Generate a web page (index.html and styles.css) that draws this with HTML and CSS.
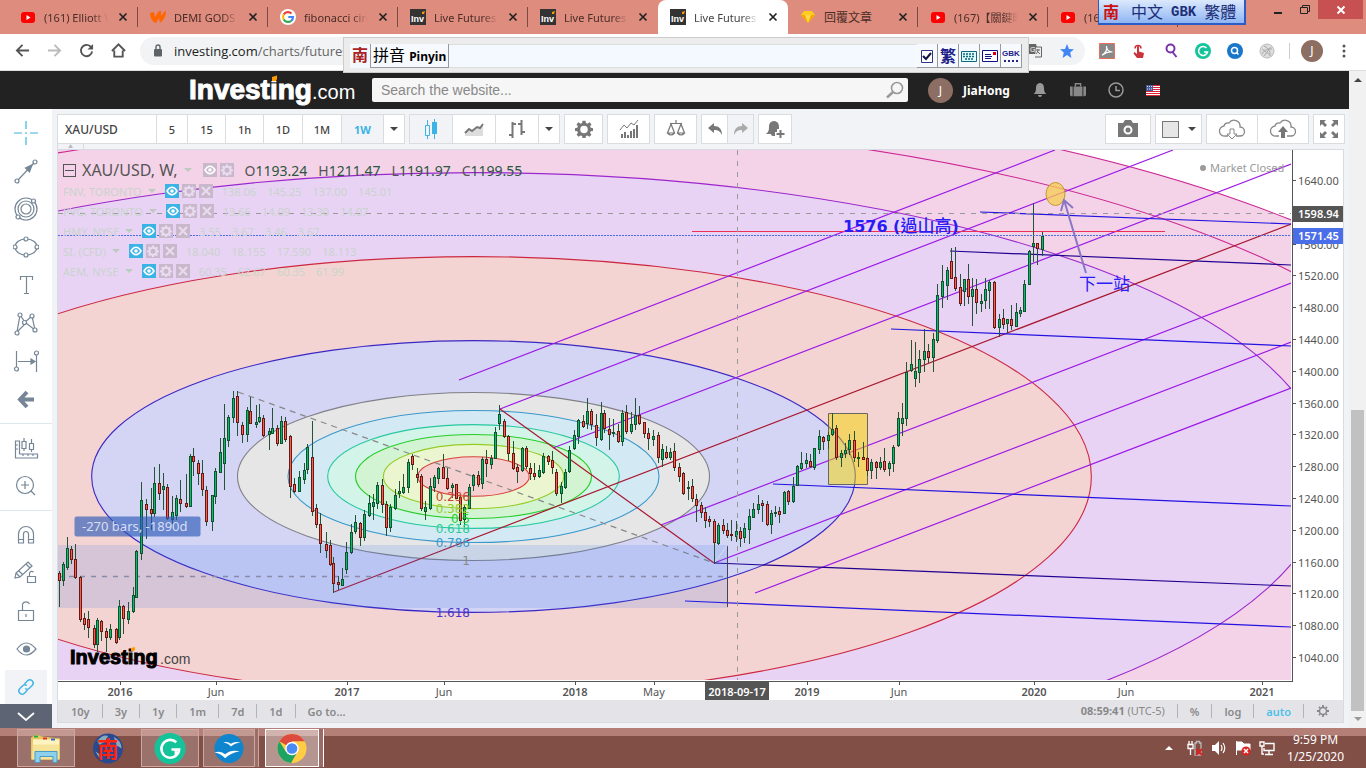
FILE: index.html
```html
<!DOCTYPE html>
<html lang="en">
<head>
<meta charset="utf-8">
<title>Live Futures Charts</title>
<link rel="stylesheet" href="styles.css">
</head>
<body>
<svg class="defs" aria-hidden="true">
  <symbol id="i-x" viewBox="0 0 10 10"><path d="M1.5 1.5l7 7M8.500 1.500l-7 7" stroke="currentColor" stroke-width="1.700" fill="none"/></symbol>
  <symbol id="i-yt" viewBox="0 0 16 16"><rect x="1" y="3" width="14" height="11" rx="3" fill="#f00"/><path d="M6.500 6v5l4-2.500z" fill="#fff"/></symbol>
  <symbol id="i-inv" viewBox="0 0 16 16"><rect width="16" height="16" fill="#333"/><text x="1" y="12.500" font-family="Liberation Sans" font-weight="700" font-size="9" fill="#fff">Inv</text><path d="M12 3l3-1-1 3h-2z" fill="#f90"/></symbol>
  <symbol id="i-eye" viewBox="0 0 14 14"><path d="M2 7c3-5 7-5 10 0-3 5-7 5-10 0z" fill="none" stroke="#fff" stroke-width="1.500"/><circle cx="7" cy="7" r="1.800" fill="#fff"/></symbol>
  <symbol id="i-gear" viewBox="0 0 24 24"><path fill-rule="evenodd" fill="currentColor" d="M10 1h4l.6 3 2 .9L19.300 3 22 5.800l-1.800 2.600.8 2 3 .6v3.500l-3 .6-.9 2 1.800 2.500-2.700 2.700-2.600-1.800-2 .8-.6 3h-4l-.6-3-2-.8-2.600 1.800-2.700-2.700 1.800-2.500-.9-2-3-.6V11l3-.6.8-2L2 5.800 4.700 3l2.700 1.900 2-.9zM12 7.500a5 5 0 1 0 0 10 5 5 0 0 0 0-10z"/></symbol>
  <symbol id="i-del" viewBox="0 0 14 14"><path d="M3 3l8 8M11 3l-8 8" stroke="currentColor" stroke-width="2"/></symbol>
  <symbol id="i-down" viewBox="0 0 8 4"><path d="M0 0h8L4 4z" fill="currentColor"/></symbol>
  <symbol id="i-cloud" viewBox="0 0 28 20"><path d="M10 17H7a5 5 0 0 1-1-10 4 4 0 0 1 5-3 6 6 0 0 1 11 4 4.500 4.500 0 0 1 0 9h-4" fill="none" stroke="#888" stroke-width="1.300"/></symbol>
</svg>

<header class="tabs">
  <div class="tab"><svg class="fav"><use href="#i-yt"/></svg><span class="tab-title">(161) Elliott Wave</span><button class="tab-x" aria-label="Close tab"><svg><use href="#i-x"/></svg></button></div>
  <div class="tab"><svg class="fav" viewBox="0 0 16 16"><path d="M0 4l4-1 1 5 4-6 2 0 0 5 3-4 2-1c0 5-2 9-6 12l-1-5-3 5C2 13 0 8 0 4z" fill="#f60"/></svg><span class="tab-title">DEMI GODS</span><button class="tab-x" aria-label="Close tab"><svg><use href="#i-x"/></svg></button></div>
  <div class="tab"><svg class="fav" viewBox="0 0 16 16"><circle cx="8" cy="8" r="8" fill="#fff"/><g fill="none" stroke-width="2.200"><path d="M11.500 4.500A5 5 0 0 0 3.700 5.500" stroke="#ea4335"/><path d="M3.700 5.500a5 5 0 0 0 0 5" stroke="#fbbc05"/><path d="M3.700 10.500a5 5 0 0 0 7.500 1.300" stroke="#34a853"/><path d="M11.200 11.800A5 5 0 0 0 13 8H8.300" stroke="#4285f4"/></g></svg><span class="tab-title">fibonacci circle</span><button class="tab-x" aria-label="Close tab"><svg><use href="#i-x"/></svg></button></div>
  <div class="tab"><svg class="fav"><use href="#i-inv"/></svg><span class="tab-title">Live Futures</span><button class="tab-x" aria-label="Close tab"><svg><use href="#i-x"/></svg></button></div>
  <div class="tab before"><svg class="fav"><use href="#i-inv"/></svg><span class="tab-title">Live Futures</span><button class="tab-x" aria-label="Close tab"><svg><use href="#i-x"/></svg></button></div>
  <div class="tab active"><svg class="fav"><use href="#i-inv"/></svg><span class="tab-title">Live Futures</span><button class="tab-x" aria-label="Close tab"><svg><use href="#i-x"/></svg></button></div>
  <div class="tab"><svg class="fav" viewBox="0 0 16 16"><path d="M4 2h8l3 4-7 8-7-8z" fill="#fc2"/><path d="M1 6h14l-7 8z" fill="#f5a800"/><path d="M5 6h6l-3 8z" fill="#ffd94a"/></svg><span class="tab-title cjk">回覆文章</span><button class="tab-x" aria-label="Close tab"><svg><use href="#i-x"/></svg></button></div>
  <div class="tab"><svg class="fav"><use href="#i-yt"/></svg><span class="tab-title">(167)【關鍵時刻</span><button class="tab-x" aria-label="Close tab"><svg><use href="#i-x"/></svg></button></div>
  <div class="tab"><svg class="fav"><use href="#i-yt"/></svg><span class="tab-title">(167)</span></div>
  <div class="win">
    <button class="win-b" aria-label="Minimize"><svg viewBox="0 0 12 12"><path d="M2 9h8" stroke="#222" stroke-width="2"/></svg></button>
    <button class="win-b" aria-label="Restore"><svg viewBox="0 0 12 12"><path d="M3.500 3V1.500h7v6H9M1.500 3.500h7v6h-7z" fill="none" stroke="#222"/></svg></button>
    <button class="win-b close" aria-label="Close"><svg viewBox="0 0 12 12"><path d="M2.500 2.500l7 7M9.500 2.500l-7 7" stroke="#fff" stroke-width="2"/></svg></button>
  </div>
  <div class="ime-mini"><b class="nan">南</b><span>中文</span><span>GBK</span><span>繁體</span></div>
</header>

<nav class="addr">
  <button class="nav-b" aria-label="Back"><svg viewBox="0 0 16 16"><path d="M15 8H2M8 2L2 8l6 6" fill="none" stroke="#555" stroke-width="2"/></svg></button>
  <button class="nav-b" aria-label="Forward"><svg viewBox="0 0 16 16"><path d="M1 8h13M8 2l6 6-6 6" fill="none" stroke="#bbb" stroke-width="2"/></svg></button>
  <button class="nav-b" aria-label="Reload"><svg viewBox="0 0 16 16"><path d="M14 9a6 6 0 1 1-2-5.500L14 5" fill="none" stroke="#555" stroke-width="2"/><path d="M15 1v6H9z" fill="#555"/></svg></button>
  <button class="nav-b" aria-label="Home"><svg viewBox="0 0 16 16"><path d="M1 8.500L8 1.500l7 7M3.500 8v6.500h9V8" fill="none" stroke="#555" stroke-width="2"/></svg></button>
  <div class="omni">
    <svg class="lock" viewBox="0 0 10 13"><rect x="1" y="5" width="8" height="7.500" rx="1" fill="#5f6368"/><path d="M3 5V3a2 2 0 0 1 4 0v2" fill="none" stroke="#5f6368" stroke-width="1.400"/></svg>
    <span class="url">investing.com<i>/charts/futures-charts</i></span>
    <svg class="s14 tr" viewBox="0 0 14 14"><path d="M0 0h8l3 10H1z" fill="#666"/><path d="M8 3h5.500v10H7" fill="#eee" stroke="#666"/><text x="2" y="8" font-size="7" fill="#fff" font-family="Liberation Sans">G</text><path d="M8 6h4M10 5c0 3-1 4-2 5M9 7l3 3" stroke="#666" fill="none"/></svg>
    <svg class="s14 star" viewBox="0 0 14 14"><path d="M7 0l2 4.900 5 .4-3.800 3.300L11.400 14 7 11l-4.400 3 1.200-5.400L0 5.300l5-.4z" fill="#4285f4"/></svg>
  </div>
  <svg class="ext" viewBox="0 0 16 16"><path d="M.5.5h15v15H.5z" fill="#888" stroke="#e76f5a"/><path d="M3 12c4-2 5-6 4.500-9 0 4 3 6 6 6-4-.5-7 .5-10 3z" fill="none" stroke="#fff" stroke-width="1.200"/></svg>
  <svg class="ext" viewBox="0 0 16 16"><path d="M6 4v7L3.500 9 2.500 10.500 6 15h6l1-5-5-1.500V4a1 1 0 0 0-2 0z" fill="#c9343c"/><path d="M4 5.500a3 3 0 1 1 6 0" fill="none" stroke="#c9343c" stroke-width="1.500"/></svg>
  <svg class="ext" viewBox="0 0 16 16"><circle cx="7.500" cy="5.500" r="4" fill="none" stroke="#73a" stroke-width="2"/><path d="M9.500 9l4 5" stroke="#73a" stroke-width="2"/></svg>
  <svg class="ext" viewBox="0 0 16 16"><circle cx="8" cy="8" r="8" fill="#15c39a"/><path d="M11.500 5a4.500 4.500 0 1 0 1 4H9" fill="none" stroke="#fff" stroke-width="1.500"/></svg>
  <svg class="ext" viewBox="0 0 16 16"><circle cx="8" cy="8" r="8" fill="#1a76c8"/><circle cx="7.500" cy="7.500" r="3" fill="none" stroke="#fff" stroke-width="1.500"/><path d="M9.500 9.500l2 2" stroke="#fff" stroke-width="1.500"/></svg>
  <svg class="ext" viewBox="0 0 16 16"><circle cx="8" cy="8" r="7" fill="#ddd" stroke="#bbb"/><path d="M5 3a9 9 0 0 1 6 10M3 11a9 9 0 0 1 10-5M5 13l7-9M3 6l8 6" fill="none" stroke="#aaa"/></svg>
  <i class="vsep"></i>
  <button class="avatar">J</button>
  <button class="dots" aria-label="Menu"><svg viewBox="0 0 4 16"><circle cx="2" cy="3" r="1.500"/><circle cx="2" cy="8" r="1.500"/><circle cx="2" cy="13" r="1.500"/></svg></button>
  <div class="ime">
    <b class="nan2">南</b><label class="pin" for="pinyin">拼音 <b>Pinyin</b></label><input id="pinyin" class="ime-in">
    <button class="ib" aria-label="Confirm"><svg viewBox="0 0 18 18"><path d="M3.500 3.500h11v12h-11z" fill="#fff" stroke="#338"/><path d="M5 9l3 3 5-6" fill="none" stroke="#114" stroke-width="2"/></svg></button>
    <button class="ib zh">繁</button>
    <button class="ib" aria-label="Keyboard"><svg viewBox="0 0 18 18"><path d="M1.500 4.500h15v10h-15z" fill="#dff" stroke="#167"/><path d="M3 7h12M3 9.500h12M5 12h8" stroke="#167" stroke-width="1.500" stroke-dasharray="2 1"/></svg></button>
    <button class="ib" aria-label="Mail"><svg viewBox="0 0 18 18"><path d="M1.500 3.500h15v11h-15z" fill="#fff" stroke="#118"/><path d="M4 7.500h6M4 9.500h7M4 11.500h6" stroke="#118"/><path d="M12 5h3v3h-3z" fill="#d00"/></svg></button>
    <button class="ib gbk">GBK<span></span></button>
  </div>
</nav>

<div class="view">
<div class="page">
  <header class="site">
    <svg class="logo" viewBox="0 0 170 38" role="img" aria-label="Investing.com"><text x="0" y="28" class="lg-b">Investing</text><text x="123" y="28" class="lg-c">.com</text><path d="M82 4h7l-1 6h-6z" fill="#222"/><path d="M83 6l5-1.500V8l-1 2h-4z" fill="#f90"/></svg>
    <form class="search"><input type="text" placeholder="Search the website..." aria-label="Search the website"><button type="button" aria-label="Search"><svg viewBox="0 0 18 18"><circle cx="11" cy="7" r="5.500" fill="none" stroke="#999" stroke-width="1.600"/><path d="M7 11l-6 5.500" stroke="#999" stroke-width="2.500"/></svg></button></form>
    <span class="avatar big">J</span>
    <a href="#" class="user">JiaHong</a>
    <svg class="hi" viewBox="0 0 16 16"><path d="M8 1c3.500.5 4 3 4 5.500 0 3 1 4.500 2.500 5.500h-13C3 11 4 9.500 4 6.500 4 4 4.500 1.500 8 1zM6 13h4a2 2 0 0 1-4 0z" fill="#999"/></svg>
    <svg class="hi" viewBox="0 0 18 16"><path d="M0 4h3v11H1.500Q0 15 0 13zM4 4h10v11H4zM15 4h3v9q0 2-1.500 2H15z" fill="#888"/><path d="M6 4V1h6v3" fill="none" stroke="#888" stroke-width="1.500"/></svg>
    <svg class="hi" viewBox="0 0 16 16"><circle cx="8" cy="8" r="7" fill="none" stroke="#999" stroke-width="1.500"/><path d="M8 4v4.500h4" fill="none" stroke="#999" stroke-width="1.500"/></svg>
    <svg class="flag" viewBox="0 0 14 11"><path fill="#fff" d="M0 0h14v11H0z"/><path d="M0 .5h14M0 2.500h14M0 4.500h14M0 6.500h14M0 8.500h14M0 10.500h14" stroke="#d23"/><path fill="#44589c" d="M0 0h7v6H0z"/><path d="M1 1.500h5M1 4h5" stroke="#dde" stroke-dasharray="1 1"/></svg>
  </header>
  <div class="work">
    <aside class="side">
      <button class="tool" aria-label="Cross"><svg viewBox="0 0 26 26"><path d="M1 13h8M17 13h8M13 1v8M13 17v8M12 13h2" stroke="#3bb3e4" fill="none"/></svg></button>
      <button class="tool" aria-label="Trend line"><svg viewBox="0 0 26 26"><path d="M5 22L21 5" /><circle cx="4" cy="23" r="2"/><circle cx="22" cy="4" r="2"/><path d="M19 7l-2.500 7-4-4z" fill="#758696"/></svg></button>
      <button class="tool" aria-label="Fibonacci circles"><svg viewBox="0 0 26 26"><circle cx="13" cy="13" r="11"/><circle cx="13" cy="13" r="8"/><circle cx="13" cy="13" r="5"/><circle cx="20.500" cy="5" r="2" fill="#fff"/><circle cx="5" cy="21" r="2" fill="#fff"/></svg></button>
      <button class="tool" aria-label="Ellipse"><svg viewBox="0 0 26 26"><ellipse cx="13" cy="13" rx="11" ry="8"/><g fill="#fff"><circle cx="13" cy="5" r="2"/><circle cx="13" cy="21" r="2"/><circle cx="2" cy="13" r="2"/><circle cx="24" cy="13" r="2"/></g></svg></button>
      <button class="tool" aria-label="Text"><svg viewBox="0 0 26 26"><path d="M7.500 8V4.500h12V8M13.500 4.500v17M11 21.500h5"/></svg></button>
      <button class="tool" aria-label="Pattern"><svg viewBox="0 0 26 26"><path d="M4 22L7 5l5 7 7-6 3 14-9-7z"/><g fill="#fff"><circle cx="4" cy="23" r="2"/><circle cx="7" cy="5" r="2"/><circle cx="11.500" cy="12.500" r="2"/><circle cx="19" cy="6" r="2"/><circle cx="22" cy="20" r="2"/></g></svg></button>
      <button class="tool" aria-label="Range"><svg viewBox="0 0 26 26"><path d="M3.500 3v16M23.500 7v17M5 13.500h15"/><circle cx="3.500" cy="21" r="2"/><circle cx="23.500" cy="5" r="2"/><path d="M18 11l4 2.500-4 2.500z" fill="#758696"/></svg></button>
      <button class="tool" aria-label="Arrow"><svg viewBox="0 0 26 26"><path d="M14 6l-7 7.500 7 7.500M7 13.500h14" stroke-width="4"/></svg></button>
      <hr>
      <button class="tool" aria-label="Measure"><svg viewBox="0 0 26 26"><path d="M2.500 6v17h22v-4h-18V6zM11 3v3M11 14v2M9 6.500h4v7H9zM18.500 4v4M18.500 15v2M16.500 8.500h4v6h-4zM3 10h2M3 14h2M10 19v2M15 19v2M20 19v2"/></svg></button>
      <button class="tool" aria-label="Zoom"><svg viewBox="0 0 26 26"><circle cx="12" cy="12" r="8.500"/><path d="M8 12h8M12 8v8M18 18l4 4"/></svg></button>
      <hr>
      <button class="tool" aria-label="Magnet"><svg viewBox="0 0 26 26"><path d="M5.500 21v-9a7.500 7.500 0 0 1 15 0v9h-5v-9a2.500 2.500 0 0 0-5 0v9zM5.500 17.500h5M15.500 17.500h5"/></svg></button>
      <button class="tool" aria-label="Lock drawing"><svg viewBox="0 0 26 26"><path d="M2 18l1-5L15 2l4 4L7 17zM3 13l4 4M6 11l4 4M13 4l4 4M14.500 16.500h8v6h-8zM16.500 16v-3a2.500 2.500 0 0 1 4-1"/></svg></button>
      <button class="tool" aria-label="Lock"><svg viewBox="0 0 26 26"><path d="M5.500 12.500h15v10h-15zM9.500 12V6a4 4 0 0 1 7 0M13 16v3"/></svg></button>
      <button class="tool" aria-label="Hide"><svg viewBox="0 0 26 26"><path d="M4 13q9-12 19 0-10 12-19 0z"/><circle cx="13.500" cy="13" r="3" fill="#758696"/></svg></button>
      <button class="tool on" aria-label="Link"><svg class="link" viewBox="0 0 26 26"><path d="M11 9l4-4a4 4 0 0 1 6 6l-4 4a4 4 0 0 1-5 0M15 17l-4 4a4 4 0 0 1-6-6l4-4a4 4 0 0 1 5 0"/></svg></button>
      <button class="more" aria-label="More"><svg viewBox="0 0 18 9"><path d="M1 1l8 7 8-7" fill="none" stroke="#fff" stroke-width="1.800"/></svg></button>
    </aside>
    <main class="main">
      <div class="bar">
        <div class="grp"><button class="sym">XAU/USD</button><button class="w30">5</button><button class="w37">15</button><button class="w37">1h</button><button class="w38">1D</button><button class="w38">1M</button><button class="w41 sel">1W</button><button class="w20" aria-label="Intervals"><svg class="dd"><use href="#i-down"/></svg></button></div>
        <div class="grp"><button class="w42 sel" aria-label="Candles"><svg class="ic" viewBox="0 0 20 20"><path d="M6.500 1v5M6.500 17v3M4.500 6.500h4v10h-4zM13.500 0v20" fill="none" stroke="#3bb3e4"/><path d="M11 3h5v12h-5z" fill="#3bb3e4"/></svg></button><button class="w42" aria-label="Area"><svg class="ic" viewBox="0 0 20 20"><path d="M1 14l4-4 3 2 5-4 3 1 3-4v12H1z" fill="#ddd"/><path d="M1 14l4-4 3 2 5-4 3 1 3-4" fill="none" stroke="#777" stroke-width="2"/></svg></button><button class="w42" aria-label="Bars"><svg class="ic" viewBox="0 0 20 20"><path d="M5.500 3v16M2 16h3M5 5h4M14.500 1v15M11 5h3M14 13h4" fill="none" stroke="#777" stroke-width="2"/></svg></button><button class="w20" aria-label="Styles"><svg class="dd"><use href="#i-down"/></svg></button></div>
        <div class="grp"><button class="w37" aria-label="Settings"><svg class="ic g"><use href="#i-gear"/></svg></button></div>
        <div class="grp"><button class="w41" aria-label="Indicators"><svg class="ic" viewBox="0 0 20 20"><path d="M3 19v-4M6 19v-6M9 19v-3M12 19v-7M15 19V10M18 19V6" stroke="#777" stroke-width="2"/><path d="M1 11l4-5 3 3 4-5 3 2 4-5" fill="none" stroke="#777"/></svg></button></div>
        <div class="grp"><button class="w41" aria-label="Compare"><svg class="ic" viewBox="0 0 20 20"><path d="M10 1v3M4 4.500h12M5 5L1.500 14h7zM15 5l-3.500 9h7zM1.500 14q3.500 4 7 0M11.500 14q3.500 4 7 0" fill="none" stroke="#777" stroke-width="1.200"/></svg></button></div>
        <div class="grp"><button class="w25" aria-label="Undo"><svg class="ic s" viewBox="0 0 16 16"><path d="M1 7l6-5v3c5 0 8 3 8 9-2-4-4-5-8-5v3z" fill="#777"/></svg></button><button class="w25 sel" aria-label="Redo"><svg class="ic s" viewBox="0 0 16 16"><path d="M15 7L9 2v3c-5 0-8 3-8 9 2-4 4-5 8-5v3z" fill="#aaa"/></svg></button></div>
        <div class="grp"><button class="w32" aria-label="Alert"><svg class="ic" viewBox="0 0 20 20"><path d="M9 2c4 .5 5 3 5 6v2h-2v3h-2v4H8q-2 0-2-2H1c2-2 3-3 3-7 0-3 1-5.500 5-6z" fill="#777"/><path d="M15.500 11v8M11.500 15h8" stroke="#777" stroke-width="2"/></svg></button></div>
        <span class="grow"></span>
        <div class="grp"><button class="w44" aria-label="Snapshot"><svg class="ic" viewBox="0 0 20 20"><path fill-rule="evenodd" d="M0 4h5l2-3h6l2 3h5v14H0zM10 6.500a4.500 4.500 0 1 0 0 9 4.500 4.500 0 0 0 0-9z" fill="#777"/><circle cx="10" cy="11" r="2.500" fill="#777"/></svg></button></div>
        <div class="grp"><button class="w45" aria-label="Background"><span class="sq"></span><svg class="dd"><use href="#i-down"/></svg></button></div>
        <div class="grp"><button class="w50" aria-label="Load"><svg class="cl" viewBox="0 0 28 20"><use href="#i-cloud"/><path d="M12 10h4v5h3l-5 5-5-5h3z" fill="#fff" stroke="#888"/></svg></button><button class="w50" aria-label="Save"><svg class="cl" viewBox="0 0 28 20"><use href="#i-cloud"/><path d="M12 19v-6H9l5-6 5 6h-3v6z" fill="#777"/></svg></button></div>
        <div class="grp"><button class="w30" aria-label="Full screen"><svg class="ic" viewBox="0 0 20 20"><path d="M1 1h6L5 3l3 3-2 2-3-3-2 2zM19 1v6l-2-2-3 3-2-2 3-3-2-2zM1 19v-6l2 2 3-3 2 2-3 3 2 2zM19 19h-6l2-2-3-3 2-2 3 3 2-2z" fill="#777"/></svg></button></div>
      </div>
      <div class="fold"><button aria-label="Collapse">▲</button></div>
      <section class="chart">
        <div class="plot">
        <svg class="canvas" viewBox="58 150 1285 550" preserveAspectRatio="xMidYMid slice">
          <defs><clipPath id="pane"><path d="M58 150h1233v530H58z"/></clipPath></defs>
          <path d="M58 150h1285v550H58z" fill="#fff"/>
          <g clip-path="url(#pane)">
            <g id="rings"></g>
            <g fill="none" stroke-width="1.200">
              <path d="M459 380L1055 150M500 409L1173 150M553 448L1291 164M661 525L1291 283M714 563L1291 342M755 593L1291 388" stroke="#9c1ae6"/>
              <path d="M334 592L1291 224M500 409L714 563" stroke="#a81830"/>
              <path d="M714 563L1291 586M950 251L1291 265" stroke="#200090"/>
              <path d="M685 601L1291 627M773 484L1291 506M891 329L1291 346M980 212L1291 224" stroke="#2412e0"/>
              <path d="M238 392L714 563" stroke="#888" stroke-dasharray="6 5"/>
            </g>
            <path d="M692 231.500H1165" stroke="#ee3058" stroke-width="1.200"/>
            <path d="M58 545h670v63H58z" fill="#2d73f0" fill-opacity=".15"/>
            <path d="M58 576.500H727" stroke="#888aa8" stroke-width="1.500" stroke-dasharray="5 6"/>
            <path d="M727.500 546v61" stroke="#445"/>
            <path d="M714 563l13-17" stroke="#dde" />
            <g id="candles" shape-rendering="crispEdges"></g>
            <path d="M828.500 413.500h39v71h-39z" fill="#f4d400" fill-opacity=".5" stroke="#666"/>
            <g id="candles-top" shape-rendering="crispEdges"></g>
            <path d="M58 235.500H1291" stroke="#4a6ee8" stroke-dasharray="2 1"/>
            <path d="M58 213.500H1291M737.500 150V680" stroke="#999" stroke-dasharray="5 6" fill="none"/>
            <ellipse cx="1055.500" cy="194" rx="9.500" ry="11.500" fill="#f7cc50" fill-opacity=".75" stroke="#c09a30"/>
            <path d="M1086 273L1064 200M1061 211l3-11 9 8" fill="none" stroke="#8878c4" stroke-width="2"/>
            <rect x="74.500" y="516.500" width="126" height="20" rx="2" fill="#2c5ab8" fill-opacity=".65"/>
            <text x="82" y="531" class="t-range">-270 bars, -1890d</text>
            <text x="843" y="232" class="t-note b">1576 (<tspan class="han">過山高</tspan>)</text>
            <text x="1079" y="290" class="t-note">下一站</text>
            <g class="t-fib" text-anchor="end">
              <text x="470" y="501" fill="#cc4438">0.236</text><text x="470" y="513" fill="#94cc28">0.382</text><text x="470" y="523" fill="#28cc28">0.5</text><text x="470" y="533" fill="#28cc94">0.618</text><text x="470" y="547" fill="#3a98cc">0.786</text><text x="470" y="565" fill="#888">1</text><text x="470" y="617" fill="#4a34cc">1.618</text>
            </g>
            <g fill="#000"><text x="70" y="664" class="lg-w">Investing</text><text x="160" y="664" class="lg-wc">.com</text><path d="M131 648l4-1v3l-1 1h-3z" fill="#f90"/></g>
            <circle cx="1203" cy="168" r="3" fill="#999"/><text x="1210" y="172" class="t-closed">Market Closed</text>
          </g>
          <path d="M1292.500 150V681.500M58 681.500H1293" stroke="#555" fill="none"/>
          <g id="axes" class="t-axis"></g>
          <path d="M1293 206h50v16h-50z" fill="#555"/><text x="1298" y="218" class="t-tag">1598.94</text>
          <path d="M1293 228h50v16h-50z" fill="#4a6ee8"/><text x="1298" y="240" class="t-tag">1571.45</text>
          <path d="M705 682h64v18h-64z" fill="#555"/><text x="737" y="696" class="t-tag" text-anchor="middle">2018-09-17</text>
        </svg>
        <div class="legend">
          <div class="lrow first"><span class="min"></span><span class="lname">XAU/USD, W,</span><svg class="la"><use href="#i-down"/></svg><span class="lb"><svg class="gr"><use href="#i-eye"/></svg><svg class="gr p"><use href="#i-gear"/></svg></span><span class="lv">O<b>1193.24</b></span><span class="lv">H<b>1211.47</b></span><span class="lv">L<b>1191.97</b></span><span class="lv">C<b>1199.55</b></span></div>
          <div class="lrow"><span>FNV, TORONTO</span><svg class="la"><use href="#i-down"/></svg><span class="lb"><svg class="bl"><use href="#i-eye"/></svg><svg class="gr p"><use href="#i-gear"/></svg><svg class="gr"><use href="#i-del"/></svg></span><span>138.06</span><span>145.25</span><span>137.00</span><span>145.01</span></div>
          <div class="lrow"><span>PVG, TORONTO</span><svg class="la"><use href="#i-down"/></svg><span class="lb"><svg class="bl"><use href="#i-eye"/></svg><svg class="gr p"><use href="#i-gear"/></svg><svg class="gr"><use href="#i-del"/></svg></span><span>13.66</span><span>14.09</span><span>13.30</span><span>14.07</span></div>
          <div class="lrow"><span>HMY, NYSE</span><svg class="la"><use href="#i-down"/></svg><span class="lb"><svg class="bl"><use href="#i-eye"/></svg><svg class="gr p"><use href="#i-gear"/></svg><svg class="gr"><use href="#i-del"/></svg></span><span>3.55</span><span>3.67</span><span>3.46</span><span>3.67</span></div>
          <div class="lrow"><span>SI, (CFD)</span><svg class="la"><use href="#i-down"/></svg><span class="lb"><svg class="bl"><use href="#i-eye"/></svg><svg class="gr p"><use href="#i-gear"/></svg><svg class="gr"><use href="#i-del"/></svg></span><span>18.040</span><span>18.155</span><span>17.590</span><span>18.113</span></div>
          <div class="lrow"><span>AEM, NYSE</span><svg class="la"><use href="#i-down"/></svg><span class="lb"><svg class="bl"><use href="#i-eye"/></svg><svg class="gr p"><use href="#i-gear"/></svg><svg class="gr"><use href="#i-del"/></svg></span><span>60.35</span><span>62.67</span><span>60.35</span><span>61.99</span></div>
        </div>
        </div>
        <footer class="foot">
          <button>10y</button><button>3y</button><button>1y</button><button>1m</button><button>7d</button><button>1d</button><button class="last">Go to...</button>
          <span class="grow"></span>
          <span class="clock"><b>08:59:41</b> (UTC-5)</span><button>%</button><button>log</button><button class="auto">auto</button><button class="last" aria-label="Settings"><svg viewBox="0 0 14 14"><circle cx="7" cy="7" r="3.500" fill="none" stroke="#888" stroke-width="1.500"/><path d="M7 1v2M7 11v2M1 7h2M11 7h2M3 3l1 1M10 10l1 1M3 11l1-1M10 4l1-1" stroke="#888" stroke-width="1.800"/></svg></button>
        </footer>
      </section>
    </main>
  </div>
</div>
<div class="scroll"><svg class="dd"><path d="M0 4h8L4 0z" fill="#444"/></svg><span class="thumb"></span><svg class="dd"><path d="M0 0h8L4 4z" fill="#999"/></svg></div>
</div>

<footer class="task">
  <button class="tk boxed" aria-label="Explorer"><svg viewBox="0 0 32 30"><path d="M1 4l5-3 6 2 18 2v21H1z" fill="#e8c860"/><path d="M3 6h26v20H2z" fill="#f5e39a"/><path d="M3 6h26v5H3z" fill="#fff4c0"/><path d="M4 2h4v2H4z" fill="#2a4"/><path d="M13 4h4v2h-4z" fill="#d33"/><path d="M21 5h4v2h-4z" fill="#36c"/><path d="M5 18h22v11h-4v-6H10v6H5z" fill="#8cd0ee" stroke="#4a9cc8"/></svg></button>
  <button class="tk" aria-label="NJStar"><svg viewBox="0 0 32 32"><circle cx="16" cy="16" r="15.500" fill="#2a4a90"/><path d="M5 8q6-7 11-5l-3 6-6 3zM22 4q8 4 8 12l-5-3zM3 19l6 4-1 4z" fill="#8ab"/><text x="5" y="25" font-size="22" font-weight="700" fill="#f21" font-family="Noto Sans CJK TC">南</text></svg></button>
  <button class="tk boxed" aria-label="Grammarly"><svg viewBox="0 0 32 32"><circle cx="16" cy="16" r="16" fill="#15c39a"/><path d="M22.500 9.500a9.200 9.200 0 1 0 3 7.500h-8M22 17v6" fill="none" stroke="#fff" stroke-width="2.600"/></svg></button>
  <button class="tk boxed stack narrow" aria-label="OpenOffice"><svg viewBox="0 0 32 32"><circle cx="16" cy="16" r="15" fill="#0e85cd"/><path d="M10 10q4-2 8 1 4-3 10-1-6 0-10 4-3-4-8-4zM1 20q7-2 11 2 6-5 15-3-9 1-15 7-4-5-11-6z" fill="#fff"/></svg></button>
  <button class="tk boxed stack cur" aria-label="Chrome"><svg viewBox="0 0 32 32"><circle cx="16" cy="16" r="15" fill="#fc4"/><path d="M16 16L3 8.500A15 15 0 0 1 29 8.500H16z" fill="#dd4b3e"/><path d="M3 8.500A15 15 0 0 0 15 31l6.500-11.500L16 16 9.500 19z" fill="#1da462"/><circle cx="16" cy="16" r="7" fill="#fff"/><circle cx="16" cy="16" r="5.500" fill="#4a8af4"/></svg></button>
  <span class="grow"></span>
  <svg class="dd up"><path d="M0 4h8L4 0z" fill="#fff"/></svg>
  <svg class="ti" viewBox="0 0 16 16"><path d="M2 1v3M5 1v3M1 4.500h5v4H1zM3.500 8v7" fill="none" stroke="#fff" stroke-width="1.300"/><path d="M8 3h1.500V1.500h3V3H14v12H8z" fill="none" stroke="#bbb" stroke-width="1.300"/><path d="M9 9l6 6M15 9l-6 6" stroke="#d22" stroke-width="2"/></svg>
  <svg class="ti" viewBox="0 0 16 16"><path d="M1 5h3l4-4v14l-4-4H1z" fill="#fff"/><path d="M10 5q2 3 0 6M12 3q3.500 5 0 10" fill="none" stroke="#fff" stroke-width="1.200"/></svg>
  <svg class="ti" viewBox="0 0 16 16"><path d="M1.500 1v14M2 2h5l2 2h6v6H2z" fill="#fff" stroke="#fff"/><circle cx="11" cy="11" r="4.500" fill="#d22"/><path d="M9 9l4 4M13 9l-4 4" stroke="#fff" stroke-width="1.500"/></svg>
  <svg class="ti" viewBox="0 0 16 16"><path d="M6 3.500h9v7H5V8M10 11v3M6 14.500h8M1 2h4v4H1zM3 6v8h2" fill="none" stroke="#fff" stroke-width="1.400"/></svg>
  <div class="time"><span>9:59 PM</span><span>1/25/2020</span></div>
</footer>
<script src="chart.js"></script>
</body>
</html>
```

FILE: styles.css
```css
* { box-sizing: border-box; }
body { margin: 0; height: 100vh; display: flex; flex-direction: column; overflow: hidden; font-family: "Noto Sans", "Noto Sans CJK TC", sans-serif; font-size: 12px; color: #444; background: #fff; }
button { font: inherit; color: inherit; border: 0; background: none; padding: 0; margin: 0; display: flex; align-items: center; justify-content: center; }
svg { display: block; flex: none; }
.defs { position: absolute; width: 0; height: 0; }
.grow { flex: 1; }
.dd { width: 8px; height: 4px; color: #444; }

.tabs { position: relative; flex: none; height: 34px; display: flex; padding-left: 8px; background: #de8c7d; color: #4a2c28; }
.tab { width: 130px; flex: 0 1 130px; display: flex; align-items: center; padding: 0 10px 0 12px; position: relative; }
.tab::after { content: ""; position: absolute; right: 0; top: 7px; height: 20px; width: 1px; background: #7a4a42; }
.tab.active::after, .tab.before::after { background: none; }
.tab.active { background: #fff; border-radius: 8px 8px 0 0; color: #444; }
.fav { width: 16px; height: 16px; margin-right: 8px; }
.tab-title { flex: 1; min-width: 0; font-size: 11px; white-space: nowrap; overflow: hidden; -webkit-mask-image: linear-gradient(90deg, #000 75%, transparent); mask-image: linear-gradient(90deg, #000 75%, transparent); }
.tab-title.cjk { font-size: 12px; -webkit-mask-image: none; mask-image: none; }
.tab-x { width: 10px; height: 16px; margin-left: 10px; color: #222; }
.tab-x svg { width: 10px; height: 10px; }
.win { margin-left: auto; display: flex; align-items: flex-start; padding-right: 3px; }
.win-b { width: 27px; height: 19px; }
.win-b svg { width: 12px; height: 12px; }
.win-b.close { width: 45px; background: #c75050; }
.ime-mini { position: absolute; right: 120px; top: 0; width: 148px; height: 25px; display: flex; align-items: center; gap: 8px; padding-left: 4px; border: 1px solid #2a5cc8; border-top: 0; border-right-width: 2px; border-bottom-width: 2px; background: linear-gradient(#dce9fc, #8fb5f4); color: #1c2f78; font-size: 16px; line-height: 22px; }
.ime-mini span:nth-of-type(2) { font-family: "Liberation Mono", monospace; font-size: 14px; font-weight: 700; }
.nan { color: #c11; margin-right: 4px; }

.addr { position: relative; flex: none; height: 37px; display: flex; align-items: center; padding: 0 20px 3px 14px; border-bottom: 1px solid #ddd; background: #fff; }
.nav-b { width: 16px; height: 16px; margin-right: 16px; }
.nav-b svg { width: 15px; height: 15px; }
.omni { flex: 1; height: 28px; margin-right: 14px; margin-left: -2px; padding: 0 11px 0 13px; display: flex; align-items: center; border-radius: 14px; background: #f1f3f4; }
.lock { width: 10px; height: 13px; margin-right: 11px; }
.url { flex: 1; font-family: "Open Sans", sans-serif; color: #222; font-size: 13px; }
.url i { font-style: normal; color: #666; }
.s14 { width: 14px; height: 14px; }
.tr { margin-right: 18px; }
.ext { width: 16px; height: 16px; margin-right: 16px; }
.vsep { width: 1px; height: 16px; background: #ccc; margin: 0 11px 0 -2px; }
.avatar { width: 22px; height: 22px; border-radius: 50%; background: #8d6e63; color: #fff; display: flex; align-items: center; justify-content: center; font-size: 12px; flex: none; }
.avatar.big { width: 25px; height: 25px; }
.dots { margin-left: 19px; }
.dots svg { width: 4px; height: 16px; fill: #555; }
.ime { position: absolute; z-index: 3; left: 343px; top: 3px; width: 686px; height: 36px; padding: 6px 6px 4px; display: flex; border: 1px solid #ccc; background: #ececec; }
.nan2 { width: 21px; line-height: 22px; text-align: center; font-size: 16px; color: #a22; background: #f2f9ff; border-right: 1px solid #999; }
.pin { line-height: 22px; padding: 0 2px; font-size: 16px; color: #000; background: #f6faff; border-right: 1px solid #999; border-bottom: 1px solid #999; white-space: nowrap; }
.pin b { font-size: 12px; }
.ime-in { flex: 1; min-width: 0; border: 0; background: #f3f9ff; border-block: 1px solid #ddd; }
.ib { width: 21px; background: #f6faff; border: solid #999; border-width: 0 1px 1px 0; color: #228; font-weight: 700; }
.ib svg { width: 18px; height: 18px; }
.zh { font-size: 16px; line-height: 16px; }
.gbk { font: 700 8px/8px "Liberation Sans", sans-serif; flex-direction: column; gap: 2px; }
.gbk span { width: 14px; border-bottom: 2px dotted #228; }

.view { flex: 1; min-height: 0; display: flex; }
.page { flex: 1; min-width: 0; display: flex; flex-direction: column; background: #f1f3f7; }
.site { flex: none; height: 38px; display: flex; align-items: center; padding-left: 189px; background: #222; }
.logo { width: 170px; height: 38px; margin-right: 13px; fill: #fff; }
.lg-b { font: 700 28px "Liberation Sans", sans-serif; stroke: #fff; stroke-width: 1px; }
.lg-c { font: 20px "Liberation Sans", sans-serif; }
.search { width: 536px; height: 24px; display: flex; background: #f6f6f6; border-radius: 2px; margin-right: 20px; }
.search input { flex: 1; min-width: 0; border: 0; background: none; padding: 0 9px; font: 14px "Liberation Sans", sans-serif; }
.search input::placeholder { color: #888; opacity: 1; }
.search button { width: 26px; }
.search svg { width: 18px; height: 18px; }
.user { margin: 0 21px 0 10px; color: #fff; font-weight: 700; text-decoration: none; width: 48px; }
.hi { width: 16px; height: 16px; margin-right: 22px; }
.flag { width: 14px; height: 11px; }

.work { flex: 1; min-height: 0; display: flex; }
.side { flex: none; width: 52px; position: relative; padding-top: 7px; background: #fff; display: flex; flex-direction: column; align-items: center; gap: 4px; overflow: hidden; }
.side hr { flex: none; width: 52px; height: 1px; margin: 3px 0; border: 0; background: #dce8f0; }
.tool { flex: none; width: 42px; height: 34px; }
.tool svg { width: 26px; height: 26px; fill: none; stroke: #758696; stroke-width: 1.2px; }
.tool svg.link { width: 20px; height: 20px; stroke: #3bb3e4; stroke-width: 1.8px; }
.tool.on { background: #f1f3f7; }
.more { position: absolute; left: 0; bottom: 0; width: 52px; height: 24px; background: #5d6474; }
.more svg { width: 18px; height: 9px; }
.main { flex: 1; min-width: 0; display: flex; flex-direction: column; padding: 5px; }
.bar { flex: none; display: flex; gap: 4px; height: 30px; margin-right: -1px; }
.grp { display: flex; border: 1px solid #dadde0; background: #fff; }
.grp button { border-left: 1px solid #dadde0; box-sizing: content-box; font-size: 11px; font-weight: 500; }
.grp button:first-child { border-left: 0; }
.grp .sym { width: 98px; justify-content: flex-start; text-indent: 7px; font-size: 12px; }
.w20 { width: 20px; } .w25 { width: 25px; } .w30 { width: 30px; } .w32 { width: 32px; } .w37 { width: 37px; } .w38 { width: 38px; } .w41 { width: 41px; } .w42 { width: 42px; } .w44 { width: 44px; } .w45 { width: 45px; gap: 9px; } .w50 { width: 50px; }
.sel { background: #f1f3f7; color: #3bb3e4; }
.grp .w41.sel { font-weight: 700; }
.ic { width: 20px; height: 20px; color: #777; }
.ic.s { width: 16px; height: 16px; }
.ic.g { width: 18px; height: 18px; }
.cl { width: 28px; height: 20px; }
.sq { width: 17px; height: 17px; border: 1px solid #777; background: #e6e6e6; }
.fold { flex: none; height: 5px; }
.fold button { width: 27px; height: 5px; font-size: 5px; line-height: 5px; color: #bbb; border: solid #dadde0; border-width: 0 1px; }
.chart { flex: 1; min-height: 0; display: flex; flex-direction: column; border: 1px solid #d8dce2; background: #fff; }
.plot { flex: 1; min-height: 0; position: relative; }
.canvas { width: 100%; height: 100%; }
.t-axis { font-size: 11px; fill: #555; }
.t-axis .yr { font-weight: 600; }
.t-tag { font-size: 11px; font-weight: 600; fill: #fff; }
.t-fib { font: 12px "DejaVu Sans", sans-serif; }
.t-range { font-size: 13px; fill: #d8def4; }
.t-note { font: 17px "DejaVu Sans", "Noto Sans CJK TC", sans-serif; fill: #2a1cf4; }
.t-note.b { font-size: 16px; font-weight: 700; }
.t-note .han { font-size: 17px; font-weight: 500; }
.t-closed { font-size: 11px; fill: #999; }
.lg-w { font: 700 20px "Liberation Sans", sans-serif; stroke: #000; stroke-width: 1px; }
.lg-wc { font: 14px "Liberation Sans", sans-serif; fill: #444; }
.legend { position: absolute; left: 5px; top: 9px; }
.lrow { display: flex; align-items: center; height: 20px; gap: 11px; font-size: 11px; color: #c8d4cc; white-space: nowrap; }
.lrow.first { height: 22px; color: #555; font-size: 14px; gap: 11px; }
.lname { font-size: 16px; margin-left: -5px; }
.lv b { font-weight: 400; color: #2c5540; }
.min { width: 13px; height: 13px; border: 1px solid #555; background: linear-gradient(#555, #555) center / 9px 1px no-repeat; }
.la { width: 8px; height: 4px; margin-left: -5px; color: #bccac0; }
.lb { display: flex; gap: 3px; margin: 0 -2px; }
.first .lb { margin: 0; }
.lb svg { width: 14px; height: 14px; color: #eadcf0; }
.gr { background: #c9b8cc; }
.p { padding: 1px; }
.bl { background: #3bb3e4; }
.foot { flex: none; height: 22px; display: flex; align-items: center; padding: 0 1px 0 1px; background: #e4e4e8; color: #888; font-size: 11px; font-weight: 600; }
.foot button { padding: 0 12px; position: relative; height: 14px; border-right: 1px solid #b4b4b8; }
.foot button.last { border: 0; }
.foot .auto { color: #4fc0e8; }
.foot svg { width: 14px; height: 14px; }
.clock { padding-right: 12px; border-right: 1px solid #b4b4b8; font-weight: 400; line-height: 14px; }
.scroll { flex: none; width: 17px; background: #f1f1f1; display: flex; flex-direction: column; align-items: center; padding: 7px 0; }
.thumb { width: 13px; height: 301px; margin: auto 0 6px; background: #c1c1c1; }

.task { flex: none; height: 40px; display: flex; align-items: center; padding: 0 22px 0 17px; background: linear-gradient(#b47f76 0 8px, #824f47 8px); color: #fff; }
.tk { width: 58px; height: 38px; margin-right: 4px; }
.tk svg { width: 32px; height: 31px; }
.tk.boxed { border: 1px solid #cba9a2; background: rgba(255,255,255,.2); }
.tk.stack { width: 52px; box-shadow: 3px 0 0 #9a6e66, 4px 0 0 #cba9a2; margin-right: 10px; }
.tk.cur { width: 54px; border-color: #fff; background: rgba(255,255,255,.4); box-shadow: 4px 0 0 #9a6e66, 5px 0 0 #fff; }
.up { margin-right: 14px; }
.ti { width: 16px; height: 16px; margin-right: 8px; }
.time { display: flex; flex-direction: column; align-items: center; gap: 1px; font-size: 12px; line-height: 16px; margin-left: 4px; }
```

FILE: chart.js
```js
const NS = 'http://www.w3.org/2000/svg';
function add(parent, tag, attrs, text) {
  const el = document.createElementNS(NS, tag);
  for (const k in attrs) el.setAttribute(k, attrs[k]);
  if (text) el.textContent = text;
  parent.appendChild(el);
}

/* Fibonacci circles: ratio, stroke, fill */
const rings = [
  [4.618, '#cc2894', '#f4d3e8'], [4.236, '#cc2894', '#f4d3e8'], [3.618, '#9c28cc', '#e9d3f5'],
  [2.618, '#cc2840', '#f4d4d2'], [1.618, '#3a28c4', '#d4d4f4'], [1, '#808088', '#e6e6e6'],
  [0.786, '#3a98cc', '#d3e9f4'], [0.618, '#28c8a0', '#d2f4e9'], [0.5, '#28cc28', '#d2f4d2'],
  [0.382, '#94cc28', '#ebf5cf'], [0.236, '#d84038', '#f4d0d0']
];
const rg = document.getElementById('rings');
for (const [r, stroke, fill] of rings)
  add(rg, 'ellipse', { cx: 473.5, cy: 476.5, rx: 236 * r, ry: 84 * r, stroke, fill, 'stroke-width': 1.1 });

/* weekly candles: x, high, body top, body bottom, low, direction (1 up, 0 down) */
const candles = `59,571,573,580,606,0 63,562,564,580,585,1 67,537,548,567,569,1 71,546,549,559,563,0 75,544,559,577,578,0
80,576,577,619,621,0 84,613,618,624,629,0 88,611,619,627,637,0 94,625,628,644,647,0 97,618,620,644,651,1
101,620,621,631,640,0 106,628,631,637,651,0 110,624,629,637,639,1 116,628,629,642,643,0 119,600,606,637,639,1
123,605,606,618,633,0 128,602,611,619,623,1 133,587,595,611,612,1 136,550,551,597,597,1 141,482,500,553,559,1
146,499,504,509,538,0 151,488,509,513,529,0 154,467,483,513,516,1 159,464,483,493,499,0 163,473,486,489,509,1
167,484,487,518,519,0 172,496,512,519,523,1 176,495,498,515,519,1 180,480,499,503,511,0 186,474,503,506,507,0
190,454,456,506,506,1 193,448,456,461,475,0 198,460,463,473,484,0 202,460,473,489,495,0 206,486,490,521,525,0
212,495,495,521,530,1 215,468,471,496,503,1 220,438,452,472,472,1 224,404,438,463,489,1 228,415,417,440,446,1
233,391,398,417,422,1 237,391,396,422,435,0 242,422,425,434,442,0 247,407,410,434,441,1 250,397,411,423,423,0
256,405,422,424,427,1 259,404,417,421,422,1 263,415,418,435,436,0 269,428,431,434,449,1 272,408,428,433,433,1
277,425,428,443,445,0 281,416,421,443,443,1 285,417,421,439,441,0 290,435,436,486,497,0 294,478,484,491,492,0
299,471,477,491,491,1 304,463,470,479,483,1 307,444,447,469,473,1 312,421,457,511,515,0 316,504,508,524,527,0
320,513,524,543,552,0 326,532,544,550,557,0 330,540,545,564,565,0 333,557,563,583,592,0 338,576,582,584,589,0
342,568,579,585,585,1 346,542,552,569,573,1 351,524,532,552,553,1 355,515,522,531,533,1 360,522,523,537,545,0
364,510,514,537,540,1 369,495,503,515,516,1 373,494,502,506,519,1 377,482,485,503,508,1 382,479,485,504,512,0
386,501,504,527,535,0 390,504,507,527,531,1 395,489,495,508,509,1 399,481,491,493,497,1 403,474,487,492,493,1
408,459,462,487,492,1 412,454,456,464,469,0 417,468,474,477,482,0 421,474,476,508,510,0 425,501,507,511,519,1
430,478,486,508,509,1 434,475,477,487,491,1 438,467,468,478,483,1 443,454,467,478,478,0 447,468,478,488,489,0
452,483,485,487,497,1 456,484,484,498,498,0 460,495,497,520,524,0 464,505,507,519,526,1 469,484,487,508,508,1
473,474,475,485,490,1 478,471,475,484,486,0 482,457,459,483,488,1 486,450,459,463,476,0 491,455,458,464,468,1
495,427,432,458,458,1 499,405,414,423,429,1 504,419,421,436,437,0 508,435,436,453,460,0 513,441,453,468,469,0
517,464,467,471,482,0 522,447,448,470,471,1 526,446,448,466,468,0 530,463,468,473,479,0 534,463,473,476,479,0
539,465,470,476,477,1 543,453,456,472,473,1 548,455,456,461,464,0 552,451,460,467,473,0 556,469,472,493,495,0
561,482,486,493,502,1 565,469,472,487,488,1 569,446,450,471,472,1 574,430,435,448,449,1 578,419,420,436,443,1
583,415,421,426,427,0 587,398,411,423,428,1 591,409,411,424,429,0 596,414,425,437,445,0 601,402,413,439,440,1
604,410,413,428,432,0 609,418,429,434,449,0 613,419,432,433,436,1 618,424,431,441,442,0 622,410,413,441,445,1
626,405,412,431,433,0 631,412,424,431,433,1 635,398,415,424,429,1 639,406,415,423,424,0 644,422,422,433,437,0
648,428,433,438,449,0 653,430,436,439,445,1 658,432,435,457,462,0 662,444,449,459,466,1 666,446,452,457,458,0
670,448,452,457,459,1 674,443,451,467,470,0 679,463,467,476,481,0 683,472,473,493,494,0 688,481,487,488,499,1
692,479,486,498,501,0 696,494,499,505,521,0 701,502,505,512,517,0 705,507,512,520,527,0 709,516,519,521,526,0
714,519,521,542,563,0 718,523,525,543,544,1 723,519,525,530,533,0 727,523,530,535,537,0 731,520,534,535,540,0
736,521,531,536,541,1 740,527,531,538,546,0 744,523,528,537,542,1 749,509,516,529,543,1 753,503,509,517,517,1
758,495,504,509,513,1 762,500,503,505,521,0 767,501,504,524,525,0 771,510,513,524,533,1 775,506,512,513,516,1
779,507,511,514,522,0 784,491,492,513,513,1 788,490,491,501,504,0 793,477,486,501,502,1 797,465,466,485,485,1
801,452,463,468,469,1 806,453,460,463,467,1 810,454,461,466,467,0 814,448,448,467,469,1 819,430,436,449,453,1
823,436,437,441,449,0 828,432,435,440,448,1 832,413,429,434,435,1 836,425,428,457,459,0 841,450,453,457,466,1
845,443,450,453,457,1 849,434,440,449,454,1 854,431,440,457,461,0 858,452,457,458,466,1 863,442,457,459,459,0
867,457,458,470,475,0 871,459,462,470,478,1 876,461,462,467,478,0 880,457,462,467,469,1 884,448,461,469,471,0
889,461,463,468,475,1 893,445,447,463,471,1 898,412,418,445,446,1 902,403,418,423,435,1 906,362,372,418,425,1
911,340,364,370,371,1 915,342,371,378,386,1 919,350,359,372,382,1 924,329,351,359,371,1 928,344,351,357,362,0
933,333,339,357,371,1 937,284,295,340,342,1 942,265,281,296,307,1 947,267,270,285,299,1 951,248,261,278,278,0
955,247,277,288,290,0 960,274,287,303,305,0 964,279,279,291,305,1 968,264,279,296,303,0 972,278,289,296,325,1
976,279,289,302,313,0 981,294,301,303,311,1 985,278,289,300,308,1 989,280,282,290,308,1 994,281,282,327,328,0
999,314,319,327,336,1 1003,309,318,324,328,0 1007,319,319,323,332,1 1011,305,319,325,329,0 1016,303,312,326,326,1
1020,307,310,313,316,1 1024,280,284,311,311,1 1029,250,251,284,284,1 1033,203,243,246,261,1 1037,243,243,248,264,0
1042,232,236,249,255,1`.trim().split(/\s+/).map(c => c.split(',').map(Number));
const below = document.getElementById('candles');
const above = document.getElementById('candles-top');
for (const [x, hi, top, bot, lo, up] of candles) {
  const g = x > 826 && x < 870 ? above : below;
  const edge = up ? '#14502c' : '#641a14';
  add(g, 'rect', { x, y: hi, width: 1, height: lo - hi + 1, fill: '#225437' });
  add(g, 'rect', { x: x - 1, y: top, width: 3, height: Math.max(1, bot - top + 1), fill: edge });
  if (bot - top > 1) add(g, 'rect', { x, y: top + 1, width: 1, height: bot - top - 1, fill: up ? '#00c070' : '#ff5b48' });
}

/* axes */
const ax = document.getElementById('axes');
for (let p = 1640, i = 0; p >= 1040; p -= 40, i++) {
  if (p === 1600) continue;
  const y = Math.round(181 + i * 31.8);
  add(ax, 'path', { d: `M1293 ${y - 0.5}h3`, stroke: '#555' });
  add(ax, 'text', { x: 1298, y: y + 4 }, p + '.00');
}
for (const [x, t] of [[120, '2016'], [216, 'Jun'], [347, '2017'], [444, 'Jun'], [575, '2018'], [654, 'May'], [807, '2019'], [899, 'Jun'], [1034, '2020'], [1126, 'Jun'], [1262, '2021']]) {
  add(ax, 'path', { d: `M${x + 0.5} 682v3`, stroke: '#555' });
  add(ax, 'text', { x, y: 696, 'text-anchor': 'middle', class: t[0] === '2' ? 'yr' : '' }, t);
}
```
